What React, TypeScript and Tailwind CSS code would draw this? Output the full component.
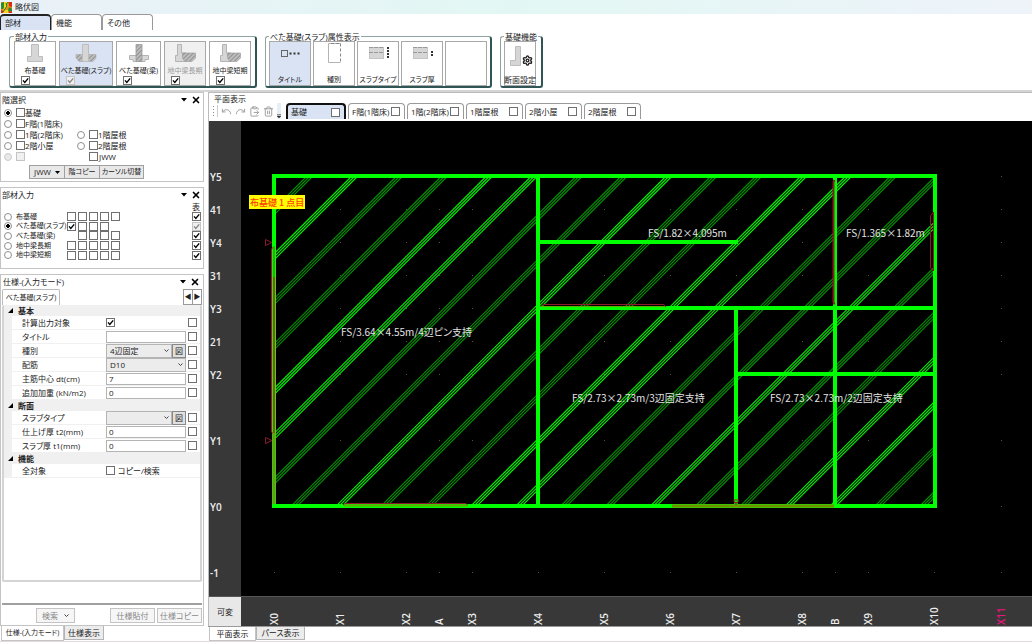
import { useState } from "react";
import type { ReactNode } from "react";
import { ClipboardPaste, Redo, Settings, Trash2, Undo, X } from "lucide-react";
import clsx from "clsx";

type CheckProps = {
  label: string;
  checked?: boolean;
  disabled?: boolean;
};

type FootingKind = "wall" | "slab" | "beam" | "ground";

const FLOOR_TABS = ["基礎", "F階(1階床)", "1階(2階床)", "1階屋根", "2階小屋", "2階屋根"];

const MEMBER_BUTTONS: { label: string; kind: FootingKind; width: string; disabled?: boolean }[] = [
  { label: "布基礎", kind: "wall", width: "w-[42px]" },
  { label: "べた基礎(スラブ)", kind: "slab", width: "w-[54px]" },
  { label: "べた基礎(梁)", kind: "beam", width: "w-[45px]" },
  { label: "地中梁長期", kind: "ground", width: "w-[42px]", disabled: true },
  { label: "地中梁短期", kind: "ground", width: "w-[42px]" },
];

// one entry per column: null = no box, true = ticked
const MEMBER_ROWS: { label: string; boxes: (boolean | null)[] }[] = [
  { label: "布基礎", boxes: [false, false, false, false, false] },
  { label: "べた基礎(スラブ)", boxes: [true, false, false, false, null] },
  { label: "べた基礎(梁)", boxes: [null, false, false, false, false] },
  { label: "地中梁長期", boxes: [false, false, false, false, false] },
  { label: "地中梁短期", boxes: [false, false, false, false, false] },
];

const X_AXIS = [
  { name: "X0", x: 33 },
  { name: "X1", x: 99 },
  { name: "X2", x: 165 },
  { name: "A", x: 198 },
  { name: "X3", x: 231 },
  { name: "X4", x: 297 },
  { name: "X5", x: 363 },
  { name: "X6", x: 429 },
  { name: "X7", x: 495 },
  { name: "X8", x: 561 },
  { name: "B", x: 594 },
  { name: "X9", x: 627 },
  { name: "X10", x: 693 },
  { name: "X11", x: 760 },
];

const Y_AXIS = [
  { name: "Y5", y: 55 },
  { name: "41", y: 88 },
  { name: "Y4", y: 121 },
  { name: "31", y: 154 },
  { name: "Y3", y: 187 },
  { name: "21", y: 220 },
  { name: "Y2", y: 253 },
  { name: "Y1", y: 319 },
  { name: "Y0", y: 385 },
  { name: "-1", y: 451 },
];

const WALLS = [
  "M33 55H694V385H33Z",
  "M297 55V385",
  "M297 121H497",
  "M297 187H694",
  "M495 187V385",
  "M594 55V385",
  "M495 253H694",
];

const SLAB_NOTES = [
  { text: "FS/3.64×4.55m/4辺ピン支持", x: 100, y: 215 },
  { text: "FS/1.82×4.095m", x: 407, y: 116 },
  { text: "FS/1.365×1.82m", x: 605, y: 116 },
  { text: "FS/2.73×2.73m/3辺固定支持", x: 331, y: 281 },
  { text: "FS/2.73×2.73m/2辺固定支持", x: 529, y: 281 },
];

const HATCH_COUNT = 22;
const HATCH_PITCH = 44.9;

function Check({ label, checked = false, disabled = false }: CheckProps) {
  const [on, setOn] = useState(checked);
  return (
    <span className="relative inline-flex size-[9px] shrink-0">
      <input
        type="checkbox"
        aria-label={label}
        checked={on}
        disabled={disabled}
        onChange={(e) => setOn(e.target.checked)}
        className="size-[9px] appearance-none border border-[#707070] bg-white disabled:border-[#c4c4c4] disabled:bg-[#f0f0f0]"
      />
      {on && (
        <svg viewBox="0 0 9 9" className="pointer-events-none absolute inset-0 size-[9px]">
          <path d="M2 4.4 3.8 6.4 7.2 2.4" fill="none" stroke={disabled ? "#888" : "#000"} strokeWidth="1.4" />
        </svg>
      )}
    </span>
  );
}

function Radio({ name, label, checked, disabled }: CheckProps & { name: string }) {
  return (
    <input
      type="radio"
      name={name}
      aria-label={label}
      defaultChecked={checked}
      disabled={disabled}
      className="size-[8px] shrink-0 appearance-none rounded-full border border-[#909090] bg-white checked:bg-[radial-gradient(circle,#000_40%,#fff_50%)] disabled:border-[#ccc] disabled:bg-[#e8e8e8]"
    />
  );
}

function FootingIcon({ kind }: { kind: FootingKind }) {
  return (
    <svg width="24" height="20" viewBox="0 0 24 20" className="shrink-0">
      <defs>
        <pattern id={`hatch-${kind}`} width="3" height="3" patternUnits="userSpaceOnUse" patternTransform="rotate(45)">
          <rect width="3" height="3" fill="#bdbdbd" />
          <path d="M0 0V3" stroke="#7d7d7d" strokeWidth="1.4" />
        </pattern>
      </defs>
      {kind === "wall" && <path d="M8.500 1.500H15.500V13.500H19.500V18.500H4.500V13.500H8.500Z" fill="#d6d6d6" stroke="#bdbdbd" />}
      {kind === "slab" && (
        <>
          <path d="M2 11.500H22V15L19 18.500H5L2 15Z" fill={`url(#hatch-${kind})`} stroke="#aaa" strokeWidth=".6" />
          <path d="M8.500 1.500H14.500V18.500H8.500Z" fill="#d6d6d6" stroke="#bdbdbd" />
        </>
      )}
      {kind === "beam" && (
        <>
          <path d="M2.500 12.500H21.500V16.500H18V18.500H6V16.500H2.500Z" fill="#d9d9d9" stroke="#b4b4b4" />
          <path d="M9 1.500H15V18.500H9Z" fill={`url(#hatch-${kind})`} stroke="#999" strokeWidth=".8" />
        </>
      )}
      {kind === "ground" && (
        <>
          <path d="M4.500 1.500H8.500V10H13V18.500H2.500V12.500H4.500Z" fill="#d6d6d6" stroke="#b4b4b4" />
          <path d="M9.500 10H22.500V15L19 18.500H12L9.500 15Z" fill={`url(#hatch-${kind})`} stroke="#999" strokeWidth=".6" />
        </>
      )}
    </svg>
  );
}

function TitleAttrIcon() {
  return (
    <svg width="36" height="20" viewBox="0 0 36 20">
      <rect x="9.500" y="7.500" width="6" height="6" fill="none" stroke="#666" />
      <path d="M17.500 10.500H28" stroke="#333" strokeWidth="2" strokeDasharray="2 2" />
    </svg>
  );
}

function KindAttrIcon() {
  return (
    <svg width="36" height="20" viewBox="0 0 36 20">
      <path d="M24.500 .5H12.500V19.500H24.500" fill="none" stroke="#b4b4b4" />
      <path d="M15 .5H25M24.500 .5V19.500" stroke="#888" strokeDasharray="3 2" />
    </svg>
  );
}

function SlabAttrIcon({ dots }: { dots: number }) {
  return (
    <svg width="36" height="20" viewBox="0 0 36 20">
      <rect x="9.500" y="4.500" width="14" height="11" fill="#d6d6d6" stroke="#c4c4c4" />
      <path d="M9 4.500H24M9 9.500H24" stroke="#999" strokeDasharray="4 1" />
      {Array.from({ length: dots }, (_, i) => (
        <rect key={i} x="27" y={(dots === 4 ? 4 : 8) + i * 3} width="2" height="2" fill="#333" />
      ))}
    </svg>
  );
}

function RibbonGroup({ title, wide = false, children }: { title: string; wide?: boolean; children: ReactNode }) {
  return (
    <fieldset
      className={clsx(
        "min-w-0 rounded-[3px] border border-r-2 border-b-2 border-[#8fa3a3] border-r-[#2f5555] border-b-[#2f5555]",
        wide ? "px-1" : "px-[3px]"
      )}
    >
      <legend className="px-px leading-[9px] whitespace-nowrap">{title}</legend>
      <div className={clsx("flex", wide ? "gap-[3px]" : "gap-[2px]")}>{children}</div>
    </fieldset>
  );
}

function PanelHeader({ title }: { title: string }) {
  return (
    <div className="flex h-[14px] items-center pr-px pl-px">
      <h2 className="flex-1">{title}</h2>
      <button aria-label="メニュー" className="flex h-3 w-3 items-center justify-center">
        <svg width="6" height="4" viewBox="0 0 6 4">
          <path d="M0 0H6L3 3.500Z" />
        </svg>
      </button>
      <button aria-label="閉じる" className="flex h-3 w-3 items-center justify-center text-black">
        <X className="size-[10px]" strokeWidth={4} />
      </button>
    </div>
  );
}

function Ribbon() {
  return (
    <div className="border-b-2 border-[#d4d4d4]">
      <nav className="flex h-4 items-end">
        {["部材", "機能", "その他"].map((t, i) => (
          <button
            key={t}
            className={clsx(
              "h-4 w-[51px] rounded-t-[4px] border border-b-0 pl-1 text-left",
              i === 0 ? "border-t-2 border-[#222] bg-[#dae3f3]" : "border-[#999] bg-white"
            )}
          >
            {t}
          </button>
        ))}
      </nav>
      <div className="flex gap-2 py-[2px] pl-[9px]">
        <RibbonGroup title="部材入力" wide>
          {MEMBER_BUTTONS.map((b) => (
            <div
              key={b.label}
              className={clsx(
                "relative h-[45px] border border-[#a8a8a8]",
                b.width,
                b.kind === "slab" && "bg-[#dae3f3]",
                b.disabled && "bg-[#f0f0f0] text-[#9a9a9a]"
              )}
            >
              <button
                disabled={b.disabled}
                className="flex size-full flex-col items-center gap-[3px] pt-px text-[7px] leading-[10px] whitespace-nowrap"
              >
                <FootingIcon kind={b.kind} />
                <span>{b.label}</span>
              </button>
              <span className="absolute bottom-0 left-[6px] flex">
                <Check label={`${b.label}を表示`} checked disabled={b.kind === "slab"} />
              </span>
            </div>
          ))}
        </RibbonGroup>
        <RibbonGroup title="べた基礎(スラブ)属性表示">
          {[
            { label: "タイトル", icon: <TitleAttrIcon /> },
            { label: "種別", icon: <KindAttrIcon /> },
            { label: "スラブタイプ", icon: <SlabAttrIcon dots={4} /> },
            { label: "スラブ厚", icon: <SlabAttrIcon dots={2} /> },
            { label: "", icon: null },
          ].map((b, i) => (
            <button
              key={b.label}
              aria-label={b.label || "未設定"}
              className={clsx(
                "flex h-[45px] w-[42px] flex-col items-center justify-between border border-[#a8a8a8] pt-px text-[7px] leading-[10px] whitespace-nowrap",
                i === 0 && "bg-[#dae3f3]"
              )}
            >
              {b.icon}
              <span>{b.label}</span>
            </button>
          ))}
        </RibbonGroup>
        <RibbonGroup title="基礎機能">
          <button className="flex h-[45px] w-8 flex-col items-center justify-between border border-[#a8a8a8] leading-[10px] whitespace-nowrap">
            <span className="relative flex pt-1">
              <svg width="26" height="20" viewBox="0 0 26 20">
                <path d="M8.500 .5H13.500V19.500H3.500V14.500H8.500Z" fill="#d6d6d6" stroke="#bdbdbd" />
              </svg>
              <Settings className="absolute right-0 bottom-0 size-[11px]" strokeWidth={3} />
            </span>
            <span>断面設定</span>
          </button>
        </RibbonGroup>
      </div>
    </div>
  );
}

function FloorPanel() {
  const rows: [string, string | null][] = [
    ["基礎", null],
    ["F階(1階床)", null],
    ["1階(2階床)", "1階屋根"],
    ["2階小屋", "2階屋根"],
  ];
  return (
    <section className="border border-[#c4c4c4] pb-[2px]">
      <PanelHeader title="階選択" />
      <div className="pl-[3px]">
        {rows.map(([left, right], i) => (
          <div key={left} className="flex h-[11px] items-center">
            <div className="flex w-[73px] items-center">
              <Radio name="floor" label={left} checked={i === 0} />
              <span className="ml-1 flex items-center">
                <Check label={`${left}を表示`} />
                {left}
              </span>
            </div>
            {right && (
              <>
                <Radio name="floor" label={right} />
                <span className="ml-1 flex items-center">
                  <Check label={`${right}を表示`} />
                  {right}
                </span>
              </>
            )}
          </div>
        ))}
        <div className="flex h-[11px] items-center">
          <div className="flex w-[85px] items-center gap-1">
            <Radio name="floor" label="未使用" disabled />
            <Check label="未使用を表示" disabled />
          </div>
          <span className="flex items-center gap-px">
            <Check label="JWWを表示" />
            JWW
          </span>
        </div>
      </div>
      <div className="flex pt-[3px] pl-7">
        <button className="flex h-[14px] w-9 items-center justify-center gap-1 border border-[#a0a0a0] bg-[#e8e8e8]">
          JWW
          <svg width="5" height="3" viewBox="0 0 5 3">
            <path d="M0 0H5L2.500 3Z" />
          </svg>
        </button>
        <button className="-ml-px h-[14px] w-9 border border-[#a0a0a0] bg-[#e8e8e8] text-[7px]">階コピー</button>
        <button className="-ml-px h-[14px] w-[45px] border border-[#a0a0a0] bg-[#e8e8e8] text-[7px] whitespace-nowrap">
          カーソル切替
        </button>
      </div>
    </section>
  );
}

function MemberPanel() {
  return (
    <section className="border border-[#c4c4c4] pb-2">
      <PanelHeader title="部材入力" />
      <div className="h-[10px] pr-[3px] text-right leading-[10px]">表</div>
      <div className="grid h-[48px] grid-rows-5">
        {MEMBER_ROWS.map((row, i) => (
          <div key={row.label} className="flex items-center pr-[2px] pl-[3px]">
            <Radio name="member" label={row.label} checked={i === 1} />
            <span className="ml-1 w-[51px] text-[7px] whitespace-nowrap">{row.label}</span>
            <span className="flex flex-1 gap-[2px]">
              {row.boxes.map((b, n) =>
                b === null ? (
                  <span key={n} className="w-[9px]" />
                ) : (
                  <Check key={n} label={`${row.label} ${n + 1}`} checked={b} />
                )
              )}
            </span>
            <Check label={`${row.label} 表示`} checked disabled={i === 1} />
          </div>
        ))}
      </div>
    </section>
  );
}

function SpecHeader({ title }: { title: string }) {
  return (
    <div className="flex h-[11px] items-center gap-[5px] bg-[#f0f0f0] pl-1 font-bold">
      <svg width="5" height="5" viewBox="0 0 5 5">
        <path d="M5 0V5H0Z" />
      </svg>
      {title}
    </div>
  );
}

function SpecRow({ label, children, last = true }: { label: string; children: ReactNode; last?: boolean }) {
  return (
    <div className="flex h-[14px] items-center border-b border-l-8 border-[#f0f0f0] pr-[3px]">
      <span className="w-[94px] pl-[10px] whitespace-nowrap">{label}</span>
      <span className="mr-[2px] flex flex-1 items-center">{children}</span>
      {last && <Check label={`${label} 選択`} />}
    </div>
  );
}

function SpecText({ label, value }: { label: string; value: string }) {
  return (
    <SpecRow label={label}>
      <input aria-label={label} defaultValue={value} className="h-3 w-full min-w-0 border border-[#b4b4b4] bg-white pl-[2px]" />
    </SpecRow>
  );
}

function SpecSelect({ label, value, figure = false }: { label: string; value: string; figure?: boolean }) {
  return (
    <SpecRow label={label}>
      <span className="relative flex flex-1">
        <select aria-label={label} className="h-[14px] w-full appearance-none border border-[#b4b4b4] bg-[#ececec] pl-[3px]">
          <option>{value}</option>
        </select>
        <svg width="5" height="4" viewBox="0 0 5 4" className="pointer-events-none absolute top-[5px] right-[3px]">
          <path d="M.5 .5 2.500 2.500 4.500 .5" fill="none" stroke="#444" />
        </svg>
      </span>
      {figure && <button className="h-[14px] w-[14px] border border-[#888] bg-[#e0e0e0] leading-[12px]">図</button>}
    </SpecRow>
  );
}

function SpecPanel() {
  return (
    <div className="flex min-h-0 flex-1 flex-col">
      <section className="flex min-h-0 flex-1 flex-col border border-[#c4c4c4] px-px pb-[2px]">
        <PanelHeader title="仕様-(入力モード)" />
        <div className="flex h-4 items-end">
          <button className="h-4 w-[58px] rounded-t-[2px] border border-b-0 border-[#bbb] text-[7px] whitespace-nowrap">
            べた基礎(スラブ)
          </button>
          <span className="flex-1" />
          <button aria-label="前のタブ" className="h-4 w-[10px] border border-[#999] text-[7px]">◀</button>
          <button aria-label="次のタブ" className="-ml-px h-4 w-[10px] border border-[#999] text-[7px]">▶</button>
        </div>
        <div className="flex-1 rounded-[2px] border-2 border-t-0 border-[#d4d4d4]">
          <SpecHeader title="基本" />
          <SpecRow label="計算出力対象">
            <Check label="計算出力対象" checked />
          </SpecRow>
          <SpecText label="タイトル" value="" />
          <SpecSelect label="種別" value="4辺固定" figure />
          <SpecSelect label="配筋" value="D10" />
          <SpecText label="主筋中心 dt(cm)" value="7" />
          <SpecText label="追加加重 (kN/m2)" value="0" />
          <SpecHeader title="断面" />
          <SpecSelect label="スラブタイプ" value="" figure />
          <SpecText label="仕上げ厚 t2(mm)" value="0" />
          <SpecText label="スラブ厚 t1(mm)" value="0" />
          <SpecHeader title="機能" />
          <SpecRow label="全対象" last={false}>
            <span className="flex items-center gap-[3px]">
              <Check label="コピー/検索" />
              コピー/検索
            </span>
          </SpecRow>
        </div>
        <div className="mt-[21px] flex gap-[2px] border-t-2 border-[#a0a0a0] pt-[3px] text-[#888]">
          <button className="ml-[34px] flex h-[15px] w-[39px] items-center justify-center gap-[6px] border border-[#c4c4c4] bg-[#f6f6f6]">
            検索
            <svg width="5" height="4" viewBox="0 0 5 4">
              <path d="M.5 .5 2.500 2.500 4.500 .5" fill="none" stroke="#444" />
            </svg>
          </button>
          <span className="flex-1" />
          <button disabled className="h-[15px] w-[45px] border border-[#c4c4c4] bg-[#f6f6f6]">仕様貼付</button>
          <button disabled className="h-[15px] w-[45px] border border-[#c4c4c4] bg-[#f6f6f6]">仕様コピー</button>
        </div>
      </section>
      <div className="flex h-[15px]">
        <button className="ml-px h-[15px] w-[63px] border border-t-0 border-[#c4c4c4] bg-white text-[7px] whitespace-nowrap">
          仕様-(入力モード)
        </button>
        <button className="h-[14px] w-10 border border-t-0 border-[#b4b4b4] bg-[#ececec]">仕様表示</button>
      </div>
    </div>
  );
}

function PlanToolbar() {
  return (
    <div className="flex h-4 items-end">
      <div className="flex h-4 w-[77px] items-center gap-[3px] pl-1 text-[#999]">
        <svg width="5" height="12" viewBox="0 0 5 12">
          <path d="M.5 1V12" stroke="#888" strokeDasharray="1 2" />
          <path d="M4.500 0V12" stroke="#ccc" />
        </svg>
        <button aria-label="元に戻す"><Undo className="size-[11px]" /></button>
        <button aria-label="やり直し"><Redo className="size-[11px]" /></button>
        <button aria-label="貼り付け"><ClipboardPaste className="size-[11px]" /></button>
        <button aria-label="削除"><Trash2 className="size-[11px]" /></button>
        <button aria-label="その他のボタン" className="flex h-4 w-1 items-end bg-[#e6eef8] pb-px">
          <svg width="4" height="4" viewBox="0 0 4 4">
            <path d="M0 .5H4M0 2H4L2 4Z" fill="#333" stroke="#333" strokeWidth=".5" />
          </svg>
        </button>
      </div>
      <div className="flex items-end gap-[2px]">
        {FLOOR_TABS.map((t, i) => (
          <div
            key={t}
            className={clsx(
              "flex h-4 items-center justify-between rounded-t-[4px] border-b-0 pr-1 pl-[3px]",
              i === 0 ? "w-[60px] border-2 border-[#111] bg-[#dae3f3]" : "w-[57px] border border-[#999] bg-white"
            )}
          >
            <button className="whitespace-nowrap">{t}</button>
            <Check label={`${t}を表示`} />
          </div>
        ))}
      </div>
    </div>
  );
}

function SlabHatch() {
  return (
    <g clipPath="url(#slab-area)" fill="none" strokeWidth="1.1">
      {Array.from({ length: HATCH_COUNT }, (_, k) => {
        const bright = [1, 4, 5].includes(k % 7);
        const x = 65 + k * HATCH_PITCH;
        return (
          <path
            key={k}
            d={[0, 3, 6].map((o) => `M${x + o} 56l-330 330`).join("")}
            stroke={bright ? "#00f400" : "#009200"}
          />
        );
      })}
    </g>
  );
}

function PlanCanvas() {
  return (
    <svg className="min-h-0 w-full flex-1 bg-black" role="img" aria-label="平面図">
      <clipPath id="slab-area">
        <rect x="33" y="55" width="661" height="330" />
      </clipPath>
      {X_AXIS.map((a) =>
        Y_AXIS.map((b) => (
          <rect key={a.name + b.name} x={a.x} y={b.y} width="1" height="1" fill="#54543a" />
        ))
      )}
      <SlabHatch />
      <g fill="none" stroke="#00ff00" strokeWidth="4">
        {WALLS.map((d) => (
          <path key={d} d={d} />
        ))}
      </g>
      {/* opening marks along the walls */}
      <g fill="none" stroke="#8c1a2a">
        <path d="M33 125.500 30.500 128V311L33 313.500M24.500 118.500V124.500L31 121.500ZM24.500 316.500V322.500L31 319.500Z" />
        <path d="M102 384 104 382.500H225L226.500 384.500" />
        <path d="M300 185.500 302 183.500H423L425 186" />
        <path d="M593.500 59 592.500 61V181L593.500 183.500" strokeWidth="2" />
        <path d="M692.500 91 689.500 95V147L692.500 150Z" />
        <path d="M492.500 379H498L495 384ZM493 381.500H497" />
      </g>
      <path d="M33 126V156" stroke="#4f9a18" strokeWidth="2" />
      <path d="M33 156V312" stroke="#c8302c" strokeWidth="2" />
      <path d="M33 312V383" stroke="#75951d" strokeWidth="3" />
      <path d="M103 384.500H226" stroke="#5fae00" strokeWidth="2" />
      <path d="M301 185.500H424" stroke="#5fae00" />
      <path d="M431 385H593" stroke="#729100" strokeWidth="3" />
      <g className="fill-[#e4e4e4] font-['Noto_Sans_CJK_JP',sans-serif] text-[10px]">
        {SLAB_NOTES.map((n) => (
          <text key={n.text} x={n.x} y={n.y}>
            {n.text}
          </text>
        ))}
      </g>
      <rect x="8" y="74" width="56" height="14" fill="#ffff00" />
      <text x="9" y="85" className="fill-[#ff3c00] font-['Noto_Sans_CJK_JP',sans-serif] text-[9px] font-medium">
        布基礎 1 点目
      </text>
    </svg>
  );
}

function PlanView() {
  return (
    <main className="flex min-w-0 flex-1 flex-col">
      <section className="flex min-h-0 flex-1 flex-col border-t border-l border-[#bbb]">
        <h2 className="h-[10px] pl-[5px] leading-[12px]">平面表示</h2>
        <PlanToolbar />
        <div className="mt-[2px] flex min-h-0 flex-1 bg-[#383838]">
          <svg className="h-full w-8 shrink-0">
            {Y_AXIS.map((a) => (
              <text key={a.name} x="1" y={a.y + 5} className="fill-[#eee] text-[10px] font-semibold">
                {a.name}
              </text>
            ))}
          </svg>
          <PlanCanvas />
        </div>
        <div className="flex h-[30px] border-t border-[#555] bg-[#383838]">
          <button className="w-8 shrink-0 bg-[#e8e8e8]">可変</button>
          <svg className="h-full min-w-0 flex-1">
            {X_AXIS.map((a) => (
              <text
                key={a.name}
                transform={`translate(${a.x + 4} 28) rotate(-90)`}
                className={clsx("text-[10px] font-semibold", a.name === "X11" ? "fill-[#f0107c]" : "fill-[#eee]")}
              >
                {a.name}
              </text>
            ))}
          </svg>
        </div>
      </section>
      <div className="flex h-[15px] border-t border-[#999] pl-px">
        <button className="h-[14px] w-[47px] border border-t-0 border-[#c4c4c4] bg-white">平面表示</button>
        <button className="h-[13px] w-[49px] border border-t-0 border-[#b4b4b4] bg-[#ececec]">パース表示</button>
      </div>
    </main>
  );
}

export default function App() {
  return (
    <div className="flex h-screen flex-col overflow-hidden bg-white font-['Open_Sans','Noto_Sans_CJK_JP',sans-serif] text-[8px] leading-[10px] text-[#222] [font-feature-settings:'palt']">
      <header className="flex h-[14px] items-center gap-[3px] bg-linear-to-r from-[#eaf1f8] via-[#e2f7f3] to-[#eef3fa] pl-px">
        <svg width="11" height="11" viewBox="0 0 11 11">
          <rect width="11" height="11" fill="#f08a18" />
          <path d="M0 1 3 0 4 4 2 7H0ZM6 0H8L6 4 5 2ZM7 7 9 5 11 7V9L8 10Z" fill="#2d8a2d" />
          <path d="M8 0H11V5L8 4ZM0 8 2 9V11H0ZM8 10 11 9V11H8Z" fill="#e02818" />
          <path d="M3 0H6L7 4 4 8H7V11H2L3 6Z" fill="#f4d820" />
          <path d="M2 10 4 7 6 4 5 1" stroke="#1c6a28" fill="none" />
        </svg>
        <h1>略伏図</h1>
      </header>
      <Ribbon />
      <div className="flex min-h-0 flex-1 gap-1">
        <aside className="flex w-[204px] shrink-0 flex-col gap-[5px]">
          <FloorPanel />
          <MemberPanel />
          <SpecPanel />
        </aside>
        <PlanView />
      </div>
      <footer className="h-[3px] border-t border-[#e4dada] bg-white" />
    </div>
  );
}
